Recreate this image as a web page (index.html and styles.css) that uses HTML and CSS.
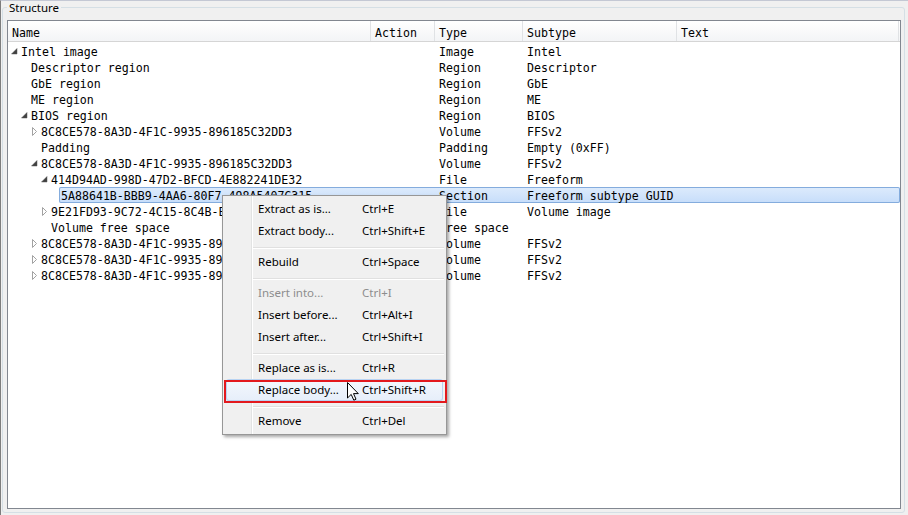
FILE: index.html
```html
<!DOCTYPE html>
<html>
<head>
<meta charset="utf-8">
<link rel="stylesheet" href="styles.css">
</head>
<body>
<div class="window">
  <fieldset class="group">
    <legend>Structure</legend>
    <div class="tree">
      <div class="thead">
        <div class="th">Name</div>
        <div class="th">Action</div>
        <div class="th">Type</div>
        <div class="th">Subtype</div>
        <div class="th">Text</div>
      </div>
      <div class="rows">
        <div class="row l0"><span class="lead"><svg class="arrow" viewBox="0 0 8 16"><path class="exp" d="M6 5.5 L6 11 L0.5 11 Z"/></svg></span><div class="cells"><span>Intel image</span><span></span><span>Image</span><span>Intel</span><span></span></div></div>
        <div class="row l1"><span class="lead"></span><div class="cells"><span>Descriptor region</span><span></span><span>Region</span><span>Descriptor</span><span></span></div></div>
        <div class="row l1"><span class="lead"></span><div class="cells"><span>GbE region</span><span></span><span>Region</span><span>GbE</span><span></span></div></div>
        <div class="row l1"><span class="lead"></span><div class="cells"><span>ME region</span><span></span><span>Region</span><span>ME</span><span></span></div></div>
        <div class="row l1"><span class="lead"><svg class="arrow" viewBox="0 0 8 16"><path class="exp" d="M6 5.5 L6 11 L0.5 11 Z"/></svg></span><div class="cells"><span>BIOS region</span><span></span><span>Region</span><span>BIOS</span><span></span></div></div>
        <div class="row l2"><span class="lead"><svg class="arrow" viewBox="0 0 8 16"><path class="col" d="M1.5 4.5 L5.5 8.5 L1.5 12.5 Z"/></svg></span><div class="cells"><span>8C8CE578-8A3D-4F1C-9935-896185C32DD3</span><span></span><span>Volume</span><span>FFSv2</span><span></span></div></div>
        <div class="row l2"><span class="lead"></span><div class="cells"><span>Padding</span><span></span><span>Padding</span><span>Empty (0xFF)</span><span></span></div></div>
        <div class="row l2"><span class="lead"><svg class="arrow" viewBox="0 0 8 16"><path class="exp" d="M6 5.5 L6 11 L0.5 11 Z"/></svg></span><div class="cells"><span>8C8CE578-8A3D-4F1C-9935-896185C32DD3</span><span></span><span>Volume</span><span>FFSv2</span><span></span></div></div>
        <div class="row l3"><span class="lead"><svg class="arrow" viewBox="0 0 8 16"><path class="exp" d="M6 5.5 L6 11 L0.5 11 Z"/></svg></span><div class="cells"><span>414D94AD-998D-47D2-BFCD-4E882241DE32</span><span></span><span>File</span><span>Freeform</span><span></span></div></div>
        <div class="row l4 selected"><span class="lead"></span><div class="cells"><span>5A88641B-BBB9-4AA6-80F7-498A5407C315</span><span></span><span>Section</span><span>Freeform subtype GUID</span><span></span></div></div>
        <div class="row l3"><span class="lead"><svg class="arrow" viewBox="0 0 8 16"><path class="col" d="M1.5 4.5 L5.5 8.5 L1.5 12.5 Z"/></svg></span><div class="cells"><span>9E21FD93-9C72-4C15-8C4B-E77F1DB2D792</span><span></span><span>File</span><span>Volume image</span><span></span></div></div>
        <div class="row l3"><span class="lead"></span><div class="cells"><span>Volume free space</span><span></span><span>Free space</span><span></span><span></span></div></div>
        <div class="row l2"><span class="lead"><svg class="arrow" viewBox="0 0 8 16"><path class="col" d="M1.5 4.5 L5.5 8.5 L1.5 12.5 Z"/></svg></span><div class="cells"><span>8C8CE578-8A3D-4F1C-9935-896185C32DD3</span><span></span><span>Volume</span><span>FFSv2</span><span></span></div></div>
        <div class="row l2"><span class="lead"><svg class="arrow" viewBox="0 0 8 16"><path class="col" d="M1.5 4.5 L5.5 8.5 L1.5 12.5 Z"/></svg></span><div class="cells"><span>8C8CE578-8A3D-4F1C-9935-896185C32DD3</span><span></span><span>Volume</span><span>FFSv2</span><span></span></div></div>
        <div class="row l2"><span class="lead"><svg class="arrow" viewBox="0 0 8 16"><path class="col" d="M1.5 4.5 L5.5 8.5 L1.5 12.5 Z"/></svg></span><div class="cells"><span>8C8CE578-8A3D-4F1C-9935-896185C32DD3</span><span></span><span>Volume</span><span>FFSv2</span><span></span></div></div>
      </div>
    </div>
  </fieldset>

  <div class="menu">
    <div class="mi"><span class="label">Extract as is...</span><span class="key">Ctrl+E</span></div>
    <div class="mi"><span class="label">Extract body...</span><span class="key">Ctrl+Shift+E</span></div>
    <div class="sep"></div>
    <div class="mi"><span class="label">Rebuild</span><span class="key">Ctrl+Space</span></div>
    <div class="sep"></div>
    <div class="mi disabled"><span class="label">Insert into...</span><span class="key">Ctrl+I</span></div>
    <div class="mi"><span class="label">Insert before...</span><span class="key">Ctrl+Alt+I</span></div>
    <div class="mi"><span class="label">Insert after...</span><span class="key">Ctrl+Shift+I</span></div>
    <div class="sep"></div>
    <div class="mi"><span class="label">Replace as is...</span><span class="key">Ctrl+R</span></div>
    <div class="mi hot"><span class="label">Replace body...</span><span class="key">Ctrl+Shift+R</span></div>
    <div class="sep"></div>
    <div class="mi"><span class="label">Remove</span><span class="key">Ctrl+Del</span></div>
  </div>
  <div class="callout"></div>
  <svg class="cursor" viewBox="0 0 12 19" width="12" height="19"><path d="M0.5 0.5 L0.5 16 L4.2 12.4 L6.8 18.2 L9 17.2 L6.5 11.6 L11.3 11.6 Z" fill="#fff" stroke="#000" stroke-width="1" stroke-linejoin="miter"/></svg>
</div>
</body>
</html>
```

FILE: styles.css
```css
html, body {
  margin: 0;
  padding: 0;
  background: #f0f0f0;
}

.window {
  position: relative;
  width: 908px;
  height: 515px;
  box-sizing: border-box;
  border-top: 1px solid #c4c8d4;
  border-left: 1px solid #7d7d7d;
  display: flex;
  flex-direction: column;
  overflow: hidden;
  font-family: "Noto Sans", "Open Sans", sans-serif;
  font-size: 11.5px;
  color: #000;
}

.group {
  flex: 1;
  min-width: 0;
  min-height: 0;
  margin: 0 3px 2px 1px;
  padding: 6px 3px 3px 4px;
  border: 1px solid #d5dfe5;
  border-radius: 3px;
  display: flex;
  flex-direction: column;
}

.group legend {
  padding: 0 2px;
  font-size: 11.5px;
  line-height: 13px;
}

.tree {
  flex: 1;
  min-height: 0;
  background: #fff;
  border: 1px solid #828790;
  display: flex;
  flex-direction: column;
  overflow: hidden;
  font-family: "DejaVu Sans Mono", "Liberation Mono", monospace;
  font-size: 11.6px;
}

.thead {
  display: grid;
  grid-template-columns: 363px 64px 88px 154px 222px;
  height: 20px;
  border-bottom: 1px solid #d5d5d5;
  background: linear-gradient(#ffffff, #f3f4f6);
}

.th {
  border-right: 1px solid #e0e2e5;
  padding: 2px 0 0 4px;
  box-sizing: border-box;
  height: 20px;
  line-height: 20px;
  overflow: hidden;
  white-space: nowrap;
}

.rows {
  padding-top: 1px;
}

.row {
  --l: 0;
  display: flex;
  height: 16px;
}
.row.l1 { --l: 1; }
.row.l2 { --l: 2; }
.row.l3 { --l: 3; }
.row.l4 { --l: 4; }

.lead {
  flex: none;
  width: calc(11px + var(--l) * 10px);
  display: flex;
  justify-content: flex-end;
}

.arrow {
  width: 8px;
  height: 16px;
  display: block;
}
.arrow .exp { fill: #3f3f3f; stroke: #5a5a5a; stroke-width: 0.5; }
.arrow .col { fill: #fff; stroke: #a2a2a2; stroke-width: 1; }

.cells {
  flex: 1;
  display: grid;
  grid-template-columns: calc(352px - var(--l) * 10px) 64px 88px 154px 1fr;
}

.cells > span {
  box-sizing: border-box;
  height: 16px;
  padding: 1px 0 0 4px;
  line-height: 16px;
  white-space: nowrap;
  overflow: hidden;
}
.cells > span:first-child {
  padding-left: 2px;
}

.row.selected .cells {
  background: linear-gradient(#ddebfc, #c6ddfa);
  box-shadow: inset 0 0 0 1px #84acdd;
  border-radius: 2px;
}

/* context menu */
.menu {
  position: absolute;
  left: 221px;
  top: 194px;
  width: 225px;
  box-sizing: border-box;
  padding: 2px;
  border: 1px solid #979797;
  background:
    linear-gradient(to right, transparent 28px, #e2e3e3 28px, #e2e3e3 29px, #ffffff 29px, #ffffff 30px, transparent 30px),
    #f0f0f0;
  box-shadow: 2px 2px 3px rgba(0, 0, 0, 0.35);
  z-index: 2;
}

.mi {
  height: 22px;
  box-sizing: border-box;
  padding: 0 0 2px 33px;
  display: flex;
  align-items: center;
  white-space: nowrap;
}

.mi .label {
  width: 104px;
  flex: none;
}

.mi.disabled {
  color: #8d8d8d;
}

.mi.hot {
  margin: 0 1px;
  padding-left: 32px;
  border-radius: 3px;
  background: linear-gradient(#f4f8fd, #e6eefa);
  box-shadow: inset 0 0 0 1px #b8d3f2;
}

.sep {
  height: 9px;
  margin-left: 28px;
  background: linear-gradient(transparent 5px, #e0e0e0 5px, #e0e0e0 6px, #ffffff 6px, #ffffff 7px, transparent 7px);
}

.callout {
  position: absolute;
  left: 223px;
  top: 379px;
  width: 223px;
  height: 23px;
  box-sizing: border-box;
  border: 2px solid #e3191e;
  z-index: 3;
}

.cursor {
  position: absolute;
  left: 346px;
  top: 381px;
  z-index: 4;
}
```
